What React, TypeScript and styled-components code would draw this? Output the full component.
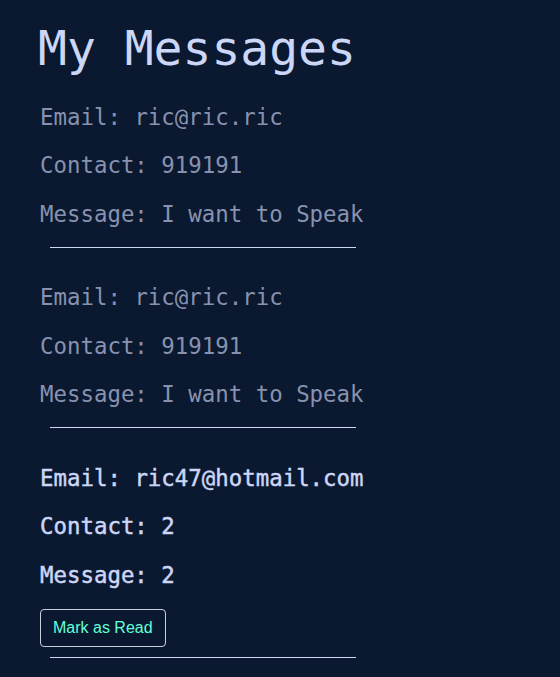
import React from "react";
import styled, { createGlobalStyle } from "styled-components";

const GlobalStyle = createGlobalStyle`
  html, body {
    margin: 0;
    padding: 0;
    background: #0a192f;
  }
  body {
    font-family: "DejaVu Sans Mono", "Liberation Mono", monospace;
  }
`;

const Page = styled.main`
  min-height: 677px;
  box-sizing: border-box;
  padding: 20px 0 0 38px;
  background: #0a192f;
`;

const Title = styled.h1`
  margin: 0;
  font-size: 48px;
  line-height: 56px;
  font-weight: 400;
  color: #ccd6f6;
`;

const List = styled.section`
  display: flex;
  flex-direction: column;
`;

const Block = styled.article<{ $first?: boolean }>`
  display: flex;
  flex-direction: column;
  align-items: flex-start;
  padding-top: ${(p) => (p.$first ? "27.5px" : "36.5px")};
  padding-left: 2px;
`;

const Fields = styled.div`
  display: flex;
  flex-direction: column;
  gap: 22.6px;
`;

const Field = styled.p<{ $unread?: boolean }>`
  margin: 0;
  font-size: 22.4px;
  line-height: 26px;
  color: ${(p) => (p.$unread ? "#ccd6f6" : "#8892b0")};
  font-weight: 400;
  -webkit-text-stroke: ${(p) => (p.$unread ? "0.45px #ccd6f6" : "0")};
  white-space: nowrap;
`;

const ReadButton = styled.button`
  margin-top: 20.5px;
  padding: 9.5px 12px;
  font-family: "Liberation Sans", Arial, sans-serif;
  font-size: 16px;
  line-height: 17px;
  color: #64ffda;
  background: transparent;
  border: 1px solid #c9cfdc;
  border-radius: 4px;
  cursor: pointer;
`;

const Divider = styled.hr<{ $tight?: boolean }>`
  margin: ${(p) => (p.$tight ? "10.5px" : "20px")} 0 0 10px;
  width: 306px;
  height: 0;
  border: none;
  border-top: 1px solid #ccd6f6;
`;

type Msg = { email: string; contact: string; message: string; unread?: boolean };

const messages: Msg[] = [
  { email: "ric@ric.ric", contact: "919191", message: "I want to Speak" },
  { email: "ric@ric.ric", contact: "919191", message: "I want to Speak" },
  { email: "ric47@hotmail.com", contact: "2", message: "2", unread: true },
];

export default function App() {
  return (
    <>
      <GlobalStyle />
      <Page>
        <Title>My Messages</Title>
        <List>
          {messages.map((m, i) => (
            <Block key={i} $first={i === 0}>
              <Fields>
                <Field $unread={m.unread}>Email: {m.email}</Field>
                <Field $unread={m.unread}>Contact: {m.contact}</Field>
                <Field $unread={m.unread}>Message: {m.message}</Field>
              </Fields>
              {m.unread && <ReadButton>Mark as Read</ReadButton>}
              <Divider $tight={m.unread} />
            </Block>
          ))}
        </List>
      </Page>
    </>
  );
}
